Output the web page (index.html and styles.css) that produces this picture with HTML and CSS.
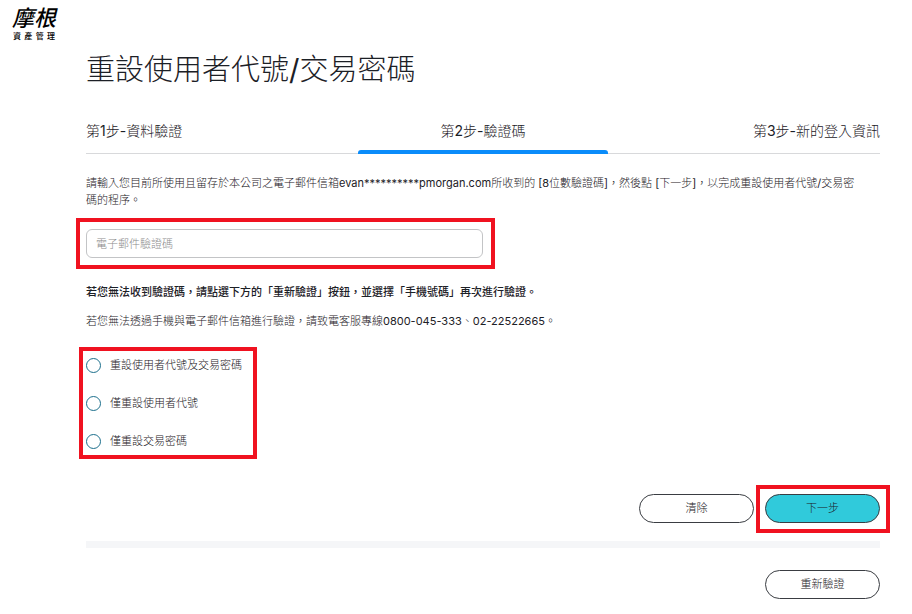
FILE: index.html
```html
<!DOCTYPE html>
<html lang="zh-Hant">
<head>
    <meta charset="UTF-8">
    <meta name="viewport" content="width=device-width, initial-scale=1.0">
    <title>重設使用者代號/交易密碼</title>
    <link rel="stylesheet" href="styles.css">
</head>
<body>
    <header class="site-header">
        <a class="logo" href="#">
            <span class="logo-name">摩根</span>
            <span class="logo-sub">資產管理</span>
        </a>
    </header>
    <main class="page">
        <h1 class="page-title">重設使用者代號/交易密碼</h1>
        <ol class="steps">
            <li class="step">第1步-資料驗證</li>
            <li class="step step-active" aria-current="step">第2步-驗證碼</li>
            <li class="step step-last">第3步-新的登入資訊</li>
        </ol>
        <form class="reset-form">
            <p class="intro">請輸入您目前所使用且留存於本公司之電子郵件信箱evan**********pmorgan.com所收到的 [8位數驗證碼]，然後點 [下一步]，以完成重設使用者代號/交易密碼的程序。</p>
            <div class="code-field marked marked-field">
                <input class="code-input" type="text" id="code" placeholder="電子郵件驗證碼" aria-label="電子郵件驗證碼">
            </div>
            <p class="note note-strong">若您無法收到驗證碼，請點選下方的「重新驗證」按鈕，並選擇「手機號碼」再次進行驗證。</p>
            <p class="note">若您無法透過手機與電子郵件信箱進行驗證，請致電客服專線0800-045-333、02-22522665。</p>
            <div class="options marked marked-options" role="radiogroup">
                <label class="option"><input class="radio" type="radio" name="reset" value="both">重設使用者代號及交易密碼</label>
                <label class="option"><input class="radio" type="radio" name="reset" value="user">僅重設使用者代號</label>
                <label class="option"><input class="radio" type="radio" name="reset" value="password">僅重設交易密碼</label>
            </div>
            <div class="actions">
                <button class="btn" type="reset">清除</button>
                <div class="marked marked-next">
                    <button class="btn btn-primary" type="submit">下一步</button>
                </div>
            </div>
            <hr class="divider">
            <div class="actions">
                <button class="btn" type="button">重新驗證</button>
            </div>
        </form>
    </main>
</body>
</html>
```

FILE: styles.css
```css
* {
    box-sizing: border-box;
}
body {
    margin: 0;
    background-color: #ffffff;
    color: #1c2026;
    font-family: Inter, "Noto Sans CJK TC Light", "Noto Sans CJK TC", sans-serif;
    font-size: 11px;
    line-height: 17px;
}
.site-header {
    height: 50px;
    padding: 2px 12px 0;
}
.logo {
    display: inline-block;
    color: #000000;
    text-decoration: none;
}
.logo-name {
    display: block;
    font-family: "Noto Sans CJK TC", sans-serif;
    font-size: 22px;
    font-style: italic;
    font-weight: 500;
    line-height: 28px;
}
.logo-sub {
    display: block;
    padding: 0 1px;
    font-family: "Noto Sans CJK TC", sans-serif;
    font-size: 8px;
    font-weight: 500;
    line-height: 12px;
    text-align-last: justify;
    text-justify: inter-character;
}
.page {
    padding: 0 32px 15px 86px;
}
.page-title {
    margin: 0;
    font-size: 29px;
    font-weight: 400;
    line-height: 40px;
}
.steps {
    display: grid;
    grid-template-columns: 1fr 250px 1fr;
    margin: 28px 0 0;
    padding: 0;
    list-style: none;
    font-size: 14px;
    line-height: 26px;
}
.step {
    padding-bottom: 9px;
    border-bottom: 1px solid #d8d9db;
}
/* Blue bar under the current step */
.step-active {
    padding-bottom: 6px;
    border-bottom: 0;
    text-align: center;
}
.step-active::after {
    content: "";
    display: block;
    height: 4px;
    margin-top: 6px;
    margin-bottom: -6px;
    border-radius: 3px 3px 0 0;
    background-color: #0a8cfa;
}
.step-last {
    text-align: right;
}
.intro {
    margin: 21px 0 20px;
    padding-right: 16px;
}
.code-field {
    width: 50%;
}
.code-input {
    display: block;
    width: 100%;
    height: 29px;
    padding: 0 9px;
    border: 1px solid #c3c4c6;
    border-radius: 6px;
    color: inherit;
    font: inherit;
}
.code-input::placeholder {
    color: #8c8c8c;
    opacity: 1;
}
.note {
    margin: 12px 0 0;
}
.note-strong {
    margin-top: 26px;
    font-family: Inter, "Noto Sans CJK TC", sans-serif;
    font-weight: 500;
}
.options {
    display: flex;
    flex-direction: column;
    align-items: flex-start;
    gap: 21px;
    width: fit-content;
    margin-top: 27px;
}
.option {
    display: flex;
    align-items: center;
    gap: 9px;
}
.radio {
    appearance: none;
    width: 15px;
    height: 15px;
    margin: 0;
    border: 1px solid #1c6f8c;
    border-radius: 50%;
}
.radio:checked {
    background-color: #1c6f8c;
    box-shadow: inset 0 0 0 3px #ffffff;
}
.actions {
    display: flex;
    justify-content: flex-end;
    gap: 11px;
}
.options + .actions {
    margin-top: 44px;
}
.btn {
    display: block;
    width: 115px;
    height: 29px;
    padding: 0;
    border: 1px solid #3a3d42;
    border-radius: 15px;
    background-color: #ffffff;
    color: #1c2026;
    font: inherit;
}
.btn-primary {
    background-color: #30cadb;
}
.divider {
    height: 7px;
    margin: 18px 0 22px;
    border: 0;
    background-color: #f5f6f8;
}
/* Red frames round the parts to fill in */
.marked {
    position: relative;
}
.marked::after {
    content: "";
    position: absolute;
    border: 4px solid #f01220;
    pointer-events: none;
}
.marked-field::after {
    inset: -11px -12px -11px -10px;
}
.marked-options::after {
    inset: -10px -15px -9px -7px;
}
.marked-next::after {
    inset: -9px -10px -10px -9px;
}
```
